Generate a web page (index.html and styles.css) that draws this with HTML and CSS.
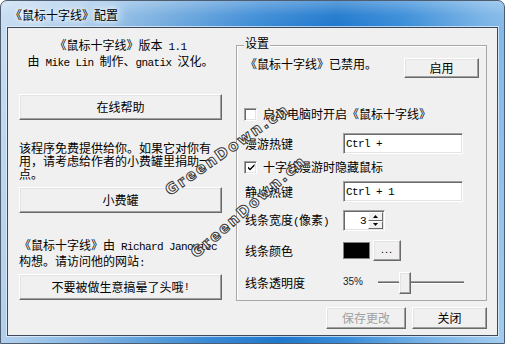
FILE: index.html
```html
<!DOCTYPE html>
<html lang="zh-CN">
<head>
<meta charset="utf-8">
<title>《鼠标十字线》配置</title>
<link rel="stylesheet" href="styles.css">
</head>
<body>
<div class="window">
  <div class="titlebar"><span class="title">《鼠标十字线》配置</span></div>
  <div class="client">
    <div class="left">
      <div class="about">《鼠标十字线》版本<span class="en"> 1.1</span><br>由<span class="en"> Mike Lin </span>制作、<span class="en">gnatix </span>汉化。</div>
      <button class="btn wide b-help">在线帮助</button>
      <p class="para p-free">该程序免费提供给你。如果它对你有<br>用，请考虑给作者的小费罐里捐助一<br>点。</p>
      <button class="btn wide b-tip">小费罐</button>
      <p class="para p-idea">《鼠标十字线》由<span class="en"> Richard Janowiec</span><br>构想。请访问他的网站<span class="en">:</span></p>
      <button class="btn wide b-site">不要被做生意搞晕了头哦<span class="en">!</span></button>
    </div>
    <div class="right">
      <div class="group">
        <span class="legend">设置</span>
        <div class="row r-status">
          <span class="status">《鼠标十字线》已禁用。</span>
          <button class="btn b-enable">启用</button>
        </div>
        <div class="row r-check1">
          <span class="check"></span><span class="check-label">启动电脑时开启《鼠标十字线》</span>
        </div>
        <div class="row r-hot1">
          <span class="lbl">漫游热键</span>
          <span class="field"><span class="en">Ctrl + </span></span>
        </div>
        <div class="row r-check2">
          <span class="check checked"><svg width="9" height="9" viewBox="0 0 9 9"><path d="M1 3.5 L3 5.5 L7.5 1 L7.5 3 L3 7.5 L1 5.5 Z" fill="#000"/></svg></span><span class="check-label">十字线漫游时隐藏鼠标</span>
        </div>
        <div class="row r-hot2">
          <span class="lbl">静止热键</span>
          <span class="field"><span class="en">Ctrl + 1</span></span>
        </div>
        <div class="row r-width">
          <span class="lbl">线条宽度<span class="en">(</span>像素<span class="en">)</span></span>
          <span class="spin">
            <span class="spin-val en">3</span>
            <span class="spin-btns">
              <span class="spin-btn"><svg width="5" height="3" viewBox="0 0 5 3"><path d="M0 3 L2.5 0 L5 3 Z" fill="#000"/></svg></span>
              <span class="spin-btn"><svg width="5" height="3" viewBox="0 0 5 3"><path d="M0 0 L5 0 L2.5 3 Z" fill="#000"/></svg></span>
            </span>
          </span>
        </div>
        <div class="row r-color">
          <span class="lbl">线条颜色</span>
          <span class="swatch"></span>
          <button class="btn b-dots">...</button>
        </div>
        <div class="row r-alpha">
          <span class="lbl">线条透明度</span>
          <span class="pct">35%</span>
          <span class="slider"><span class="thumb"></span></span>
        </div>
      </div>
      <div class="actions">
        <button class="btn b-save" disabled>保存更改</button>
        <button class="btn b-close">关闭</button>
      </div>
    </div>
  </div>
  <span class="wm wm1">GreenDown.cn</span>
  <span class="wm wm2">GreenDown.cn</span>
</div>
</body>
</html>
```
FILE: styles.css
```css
html, body {
  margin: 0;
  padding: 0;
}
body {
  width: 505px;
  height: 344px;
  overflow: hidden;
  font-family: "Noto Sans CJK SC", sans-serif;
  font-size: 12px;
  color: #000;
  background: #fff;
}
.window {
  position: relative;
  box-sizing: border-box;
  width: 505px;
  height: 344px;
  border: 1px solid #4e5d70;
  border-radius: 7px 7px 0 0;
  padding: 0 6px 7px 6px;
  display: flex;
  flex-direction: column;
  overflow: hidden;
  background:
    linear-gradient(180deg, rgba(255,255,255,0.28) 0, rgba(255,255,255,0.05) 14px, rgba(255,255,255,0) 26px),
    linear-gradient(100deg, #c9def3 0%, #aacbeb 14%, #74acdf 30%, #3d8cd6 46%, #1f78cd 60%, #3a8dd9 72%, #77b2e6 86%, #a3ccef 100%);
}
.titlebar {
  height: 26px;
  display: flex;
  align-items: center;
  padding-left: 3px;
}
.title {
  line-height: 14px;
  margin-top: 1px;
  text-shadow: 0 0 4px #fff, 0 0 8px #eef6ff, 0 0 12px #e4f0ff, 0 0 16px rgba(230,242,255,0.9);
}
.client {
  flex: 1;
  display: flex;
  background: #f0f0f0;
  border: 1px solid #3b4859;
  box-shadow: 0 0 0 1px rgba(235,244,252,0.7);
}
.en {
  font-family: "Liberation Mono", monospace;
  font-size: 11px;
  letter-spacing: -0.6px;
}
.left {
  width: 203px;
  margin-left: 11px;
  padding-top: 10px;
  display: flex;
  flex-direction: column;
}
.about {
  line-height: 13px;
  text-align: center;
}
.para {
  margin: 0;
  line-height: 13px;
}
.btn {
  box-sizing: border-box;
  display: flex;
  align-items: center;
  justify-content: center;
  margin: 0;
  padding: 0;
  font-family: "Noto Sans CJK SC", sans-serif;
  font-size: 12px;
  line-height: 14px;
  color: #000;
  background: #f0f0f0;
  border: 1px solid;
  border-color: #fff #696969 #696969 #fff;
  box-shadow: inset -1px -1px #a0a0a0, inset 1px 1px #e3e3e3;
}
.wide {
  width: 203px;
  height: 26px;
}
.b-help { margin-top: 24px; }
.p-free { margin-top: 21px; }
.b-tip { margin-top: 7px; }
.p-idea { margin-top: 25px; }
.b-site { margin-top: 4px; }
.right {
  width: 251px;
  margin-left: 14px;
  display: flex;
  flex-direction: column;
}
.group {
  position: relative;
  box-sizing: border-box;
  height: 256px;
  margin-top: 17px;
  border: 1px solid #a7a7a7;
  box-shadow: inset 1px 1px #fff;
  padding: 0 7px 0 8px;
}
.legend {
  position: absolute;
  left: 7px;
  top: -10px;
  padding: 0 1px;
  line-height: 14px;
  background: #f0f0f0;
}
.row {
  display: flex;
  align-items: center;
}
.r-status {
  margin-top: 12px;
  height: 20px;
  justify-content: space-between;
  align-items: flex-start;
}
.status {
  line-height: 14px;
  margin-top: -1px;
}
.b-enable {
  width: 75px;
  height: 20px;
}
.r-check1 { margin-top: 26px; height: 20px; }
.r-hot1 { margin-top: 9px; height: 21px; }
.r-check2 { margin-top: 3px; height: 20px; }
.r-hot2 { margin-top: 4px; height: 21px; }
.r-width { margin-top: 8px; height: 21px; }
.r-color { margin-top: 9px; height: 21px; }
.r-alpha { margin-top: 11px; height: 22px; }
.check {
  box-sizing: border-box;
  width: 13px;
  height: 13px;
  margin-left: -1px;
  background: #fff;
  border: 1px solid;
  border-color: #a0a0a0 #fff #fff #a0a0a0;
  box-shadow: inset 1px 1px #696969, inset -1px -1px #e3e3e3;
  display: flex;
  align-items: center;
  justify-content: center;
}
.check svg { display: block; margin: 1px 0 0 1px; }
.check-label {
  margin-left: 6px;
  line-height: 14px;
}
.lbl {
  width: 98px;
  line-height: 14px;
  flex: none;
}
.field {
  box-sizing: border-box;
  width: 120px;
  height: 21px;
  background: #fff;
  border: 1px solid;
  border-color: #a0a0a0 #fff #fff #a0a0a0;
  box-shadow: inset 1px 1px #696969, inset -1px -1px #e3e3e3;
  padding: 0 0 0 2px;
  display: flex;
  align-items: center;
}
.spin {
  box-sizing: border-box;
  width: 42px;
  height: 21px;
  background: #fff;
  border: 1px solid;
  border-color: #a0a0a0 #fff #fff #a0a0a0;
  box-shadow: inset 1px 1px #696969, inset -1px -1px #e3e3e3;
  display: flex;
  align-items: center;
  justify-content: flex-end;
  padding: 1px 1px 1px 0;
}
.spin-val { margin-right: 2px; }
.spin-btns {
  display: flex;
  flex-direction: column;
  width: 15px;
  height: 17px;
}
.spin-btn {
  box-sizing: border-box;
  flex: 1;
  display: flex;
  align-items: center;
  justify-content: center;
  background: #f0f0f0;
  border: 1px solid;
  border-color: #fff #696969 #696969 #fff;
}
.spin-btn svg { display: block; }
.swatch {
  box-sizing: border-box;
  width: 27px;
  height: 17px;
  background: #000;
  border: 1px solid #808080;
}
.b-dots {
  width: 28px;
  height: 21px;
  margin-left: 3px;
  font-family: "Liberation Sans", sans-serif;
  font-size: 11px;
  letter-spacing: 1px;
  padding-bottom: 3px;
}
.pct {
  width: 35px;
  font-family: "Liberation Sans", sans-serif;
  font-size: 10px;
  line-height: 12px;
  margin-top: -3px;
  color: #222;
}
.slider {
  width: 86px;
  height: 22px;
  display: flex;
  align-items: center;
  background: linear-gradient(180deg, transparent 9px, #a0a0a0 9px, #a0a0a0 10px, #696969 10px, #696969 11px, #fff 11px, #fff 12px, transparent 12px);
}
.thumb {
  box-sizing: border-box;
  width: 12px;
  height: 22px;
  margin-left: 21px;
  background: #f0f0f0;
  border: 1px solid;
  border-color: #fff #696969 #696969 #fff;
  box-shadow: inset -1px -1px #a0a0a0, inset 1px 1px #e3e3e3;
}
.actions {
  display: flex;
  justify-content: flex-end;
  margin-top: 6px;
}
.b-save {
  width: 80px;
  height: 22px;
  color: #a0a0a0;
}
.b-close {
  width: 75px;
  height: 22px;
  margin-left: 6px;
}
.wm {
  position: absolute;
  font-family: "DejaVu Sans", sans-serif;
  font-weight: bold;
  font-size: 15px;
  line-height: 16px;
  letter-spacing: 2px;
  color: rgba(255,255,255,0.9);
  -webkit-text-stroke: 1px #3a3a3a;
  transform-origin: 0 50%;
  white-space: nowrap;
}
.wm1 {
  left: 166px;
  top: 183px;
  transform: rotate(-35deg);
}
.wm2 {
  left: 192px;
  top: 246px;
  transform: rotate(-41deg);
}
```
